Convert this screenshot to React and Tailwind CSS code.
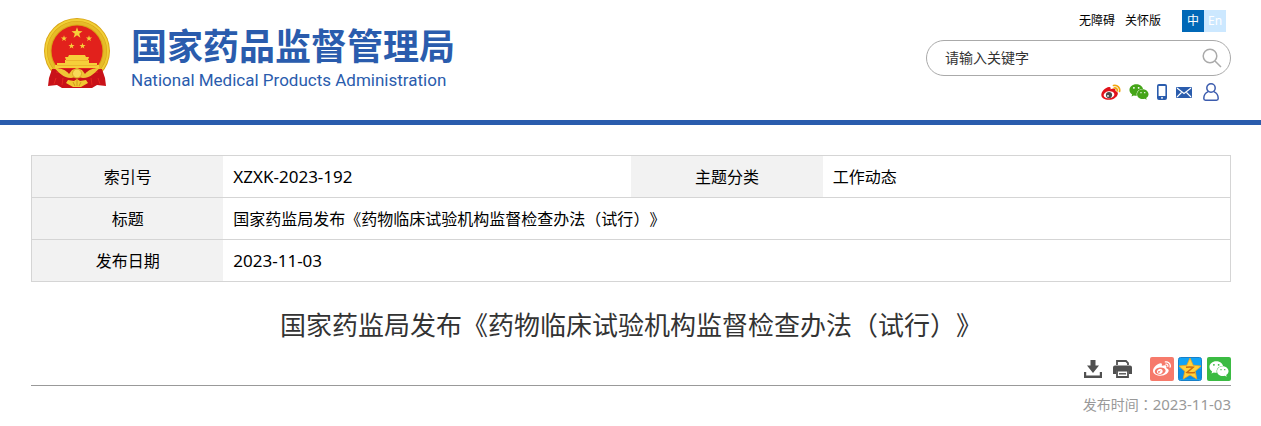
import { useState } from "react";
import { FaWeibo, FaWeixin } from "react-icons/fa";

function star(cx, cy, r) {
  return Array.from({ length: 10 }, (_, i) => {
    const a = (Math.PI / 5) * i - Math.PI / 2;
    const d = i % 2 ? r * 0.4 : r;
    return `${(cx + d * Math.cos(a)).toFixed(2)},${(cy + d * Math.sin(a)).toFixed(2)}`;
  }).join(" ");
}

function Emblem() {
  return (
    <svg viewBox="0 0 68 72" className="h-[72px] w-[68px] shrink-0" aria-hidden="true">
      <circle cx="34" cy="33" r="33" fill="#d9a516" />
      <circle cx="34" cy="33" r="31" fill="none" stroke="#f1cf35" strokeWidth="2" />
      <circle cx="34" cy="33" r="28" fill="none" stroke="#e6bb28" strokeWidth="3" />
      <circle cx="34" cy="33" r="25.5" fill="#e2211c" />
      <g fill="#f6cf3a">
        <polygon points={star(34, 15, 5.8)} />
        <polygon points={star(21, 20.5, 3.2)} />
        <polygon points={star(46, 20.5, 3.2)} />
        <polygon points={star(28.5, 28, 3.2)} />
        <polygon points={star(39.5, 28, 3.2)} />
        <path d="M26 37h16l1 2h3l-1 3h1v3h8v2h2v3H12v-3h2v-2h8v-3h1l-1-3h3z" />
      </g>
      <path d="M23 42.5h22M14 47.5h40" stroke="#e5a325" strokeWidth=".6" />
      <path d="M9 51h50l3 9 1 8-9-1-5 3H19l-5-3-9 1 1-8z" fill="#c91118" />
      <path d="M13 54c6 0 9 2 13 5M55 54c-6 0-9 2-13 5M13 60l-2 6M55 60l2 6M20 60l-1 7M48 60l1 7" stroke="#e3271f" strokeWidth="1" fill="none" />
      <path d="M11 50c7 0 12 2 15 6l3-4 5-2 5 2 3 4c3-4 8-6 15-6-5 4-9 10-17 10-2 0-3-1-6-1s-4 1-6 1c-8 0-12-6-17-10z" fill="#efc436" />
      <circle cx="34" cy="55.500" r="4.500" fill="#f8da58" stroke="#dca724" strokeWidth="1" />
      <path d="M25 62l6 1 3-2 3 2 6-1 2 3-7 4h-8l-7-4z" fill="#f1c832" />
      <path d="M30 64l2 4M34 62v6M38 64l-2 4" stroke="#c98d17" strokeWidth=".8" />
    </svg>
  );
}

function WeiboIcon() {
  return (
    <svg viewBox="0 0 20 17" className="h-[17px] w-5" aria-hidden="true">
      <path d="M8 3c1.500-.2 2 .8 1.500 2.200 3-1.200 5.500-.9 5 1.700 2 .6 2.600 1.800 2.300 3.100-.8 3.500-4.800 5.800-9 5.800C3.500 15.800.3 13.800.3 11 .3 7.500 4.500 3.400 8 3z" fill="#e1121a" />
      <ellipse cx="8" cy="10.800" rx="5.400" ry="3.500" fill="#fff" transform="rotate(-8 8 10.800)" />
      <circle cx="8" cy="11" r="3.100" fill="#4a4a4a" />
      <circle cx="7" cy="11.900" r=".9" fill="#fff" />
      <path d="M12.500 1.500c4-.8 7 2.200 6 6M13.200 4c2-.3 3.400 1 3 2.900" stroke="#f1a50e" strokeWidth="1.700" fill="none" strokeLinecap="round" />
    </svg>
  );
}

function PhoneIcon() {
  return (
    <svg viewBox="0 0 10 16" className="h-4 w-[10px]" aria-hidden="true">
      <path fillRule="evenodd" fill="#2a5cad" d="M2 0h6a2 2 0 0 1 2 2v12a2 2 0 0 1-2 2H2a2 2 0 0 1-2-2V2a2 2 0 0 1 2-2zM1.600 2v10h6.800V2zM4 13.200v1.300h2v-1.300z" />
    </svg>
  );
}

function MailIcon() {
  return (
    <svg viewBox="0 0 16 11" className="h-[11px] w-4" aria-hidden="true">
      <rect width="16" height="11" rx="1" fill="#2a5cad" />
      <path d="M1 1l7 5.500L15 1M1 10l4.500-4.500M15 10l-4.500-4.500" stroke="#fff" strokeWidth="1.100" fill="none" />
    </svg>
  );
}

function UserIcon() {
  return (
    <svg viewBox="0 0 16 18" className="h-[18px] w-4" fill="none" stroke="#3c5cae" strokeWidth="1.500" aria-hidden="true">
      <circle cx="8" cy="5" r="4.200" />
      <path d="M5.200 8.600C2.300 9.800.8 12.500.8 15.500c0 1.100.6 1.700 1.700 1.700h11c1.100 0 1.700-.6 1.700-1.700 0-3-1.500-5.700-4.400-6.900" />
    </svg>
  );
}

function DownloadIcon() {
  return (
    <svg viewBox="0 0 18 18" className="size-[18px]" fill="#505050" aria-hidden="true">
      <path d="M6.500 0h5v5.500H15L9 13 3 5.500h3.500z" />
      <path d="M0 12h2.200v3.500h13.600V12H18v6H0z" />
    </svg>
  );
}

function PrintIcon() {
  return (
    <svg viewBox="0 0 19 18" className="h-[18px] w-[19px]" aria-hidden="true">
      <path d="M4 5V1h9l2 2v2" fill="none" stroke="#505050" strokeWidth="1.800" />
      <path d="M2 5.500h15a2 2 0 0 1 2 2V14h-3v-3.500H3V14H0V7.500a2 2 0 0 1 2-2z" fill="#505050" />
      <path d="M4 10.500h11V17H4z" fill="#fff" stroke="#505050" strokeWidth="1.800" />
      <path d="M6 13.800h7" stroke="#505050" strokeWidth="1.400" />
    </svg>
  );
}

function QzoneIcon() {
  return (
    <svg viewBox="0 0 24 24" className="size-6" aria-hidden="true">
      <rect x=".5" y=".5" width="23" height="23" rx="2" fill="#11a3f5" stroke="#1780c8" />
      <path d="M1 12h22v10H1z" fill="#0b8ee6" />
      <polygon points="12,1 15.200,8.200 23,9 17.200,14.300 18.800,22 12,18 5.200,22 6.800,14.300 1,9 8.800,8.200" fill="#ffd23b" stroke="#f0a51c" strokeWidth=".8" strokeLinejoin="round" />
      <path d="M8 10.200c3-.5 5-.4 7.200 0L9 15.400c2.500.6 5 .5 8 0" fill="none" stroke="#c96d10" strokeWidth="1.500" />
    </svg>
  );
}

// full-width punctuation that sits in the middle of its square
function Mid({ children }) {
  return <span className="font-['Noto_Sans_CJK_TC',sans-serif]" lang="zh-TW">{children}</span>;
}

function Title() {
  return <>国家药监局发布《药物临床试验机构监督检查办法<Mid>（</Mid>试行<Mid>）</Mid>》</>;
}

function Label({ children }) {
  return <th scope="row" className="bg-[#f2f2f2] text-center font-normal">{children}</th>;
}

export default function App() {
  const [keyword, setKeyword] = useState("");

  return (
    <div className="bg-white pb-2 font-['Noto_Sans','Noto_Sans_CJK_SC',sans-serif] text-black [text-spacing-trim:space-all]" lang="zh-CN">
      <header className="flex h-[125px] items-start justify-between border-b-[5px] border-[#2a5cad] pl-[43px] pr-[30px]">
        <a href="#" className="flex pt-[18px] text-[#2a5cad]">
          <Emblem />
          <span className="flex flex-col pl-5 pt-[6px]">
            <span className="font-['Noto_Sans_CJK_SC',sans-serif] text-[36px]/10 font-bold whitespace-nowrap">国家药品监督管理局</span>
            <span className="pt-[6px] font-['Roboto',sans-serif] text-[17px]/5 whitespace-nowrap">National Medical Products Administration</span>
          </span>
        </a>

        <div className="flex w-[305px] flex-col pt-[10px]">
          <nav className="flex h-[22px] items-center justify-end pr-[5px] text-xs">
            <a href="#">无障碍</a>
            <a href="#" className="ml-[10px] mr-[21px]">关怀版</a>
            <a href="#" className="size-[22px] bg-[#0068b7] text-center leading-[22px] text-white">中</a>
            <a href="#" className="size-[22px] bg-[#cce8ff] text-center leading-[22px] text-white">En</a>
          </nav>
          <form className="mt-2 flex h-9 items-center rounded-full border border-[#aaa] pl-[18px] pr-2" onSubmit={(e) => e.preventDefault()}>
            <input
              type="text"
              aria-label="请输入关键字"
              placeholder="请输入关键字"
              value={keyword}
              onChange={(e) => setKeyword(e.target.value)}
              className="min-w-0 flex-1 text-sm outline-none placeholder:text-[#333]"
            />
            <button type="submit" aria-label="搜索">
              <svg viewBox="0 0 20 20" className="size-5" fill="none" stroke="#aaa" strokeWidth="1.500">
                <circle cx="8" cy="8" r="6.800" />
                <path d="M13 13l6 6" />
              </svg>
            </button>
          </form>
          <div className="mt-[7px] flex h-[18px] items-center justify-end pr-3">
            <a href="#" aria-label="微博"><WeiboIcon /></a>
            <a href="#" aria-label="微信" className="ml-2"><FaWeixin className="size-5 text-[#45a518]" /></a>
            <a href="#" aria-label="移动端" className="ml-2"><PhoneIcon /></a>
            <a href="#" aria-label="邮箱" className="ml-[9px]"><MailIcon /></a>
            <a href="#" aria-label="个人中心" className="ml-[11px]"><UserIcon /></a>
          </div>
        </div>
      </header>

      <main className="pl-[31px] pr-[30px] pt-[30px]">
        <table className="w-full table-fixed border-collapse border border-[#d5d5d5] text-base">
          <colgroup>
            <col className="w-[16%]" />
            <col className="w-[34%]" />
            <col className="w-[16%]" />
            <col className="w-[34%]" />
          </colgroup>
          <tbody>
            <tr className="h-[42px] border-b border-[#d5d5d5]">
              <Label>索引号</Label>
              <td className="px-[10px] text-[17px]">XZXK-2023-192</td>
              <Label>主题分类</Label>
              <td className="px-[10px]">工作动态</td>
            </tr>
            <tr className="h-[42px] border-b border-[#d5d5d5]">
              <Label>标题</Label>
              <td colSpan={3} className="px-[10px]"><Title /></td>
            </tr>
            <tr className="h-[42px]">
              <Label>发布日期</Label>
              <td colSpan={3} className="px-[10px] text-[17px]">2023-11-03</td>
            </tr>
          </tbody>
        </table>

        <h1 className="pt-[22px] text-center text-[26px]/10 text-[#333]"><Title /></h1>

        <div className="flex items-center justify-end border-b border-[#999] pb-1 pt-3">
          <button type="button" aria-label="下载"><DownloadIcon /></button>
          <button type="button" aria-label="打印" className="ml-[11px] mr-[18px]"><PrintIcon /></button>
          <a href="#" aria-label="分享到微博" className="flex size-6 items-center justify-center rounded-xs bg-[#f67a6b] text-white">
            <FaWeibo className="size-[18px]" />
          </a>
          <a href="#" aria-label="分享到QQ空间" className="ml-1 mr-[5px]"><QzoneIcon /></a>
          <a href="#" aria-label="分享到微信" className="flex size-6 items-center justify-center rounded-xs bg-[#3bbb43] text-white">
            <FaWeixin className="size-5" />
          </a>
        </div>

        <p className="pt-[6px] text-right text-sm/6 text-[#999]">
          发布时间<Mid>：</Mid><span className="text-[15px]">2023-11-03</span>
        </p>
      </main>
    </div>
  );
}
